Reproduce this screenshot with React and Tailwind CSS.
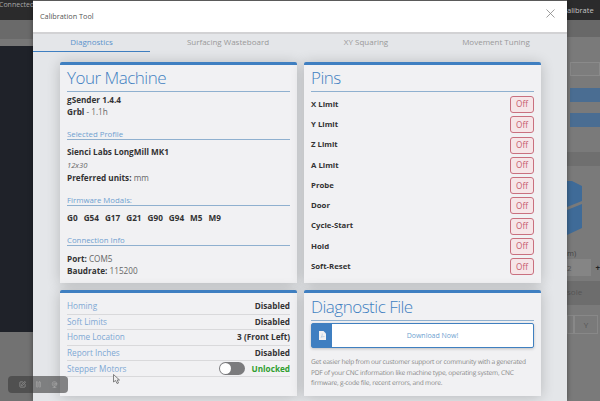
import React from "react";
import { X, Pause, SquarePen, Webcam } from "lucide-react";

const pins = ["X Limit", "Y Limit", "Z Limit", "A Limit", "Probe", "Door", "Cycle-Start", "Hold", "Soft-Reset"];
const modals = ["G0", "G54", "G17", "G21", "G90", "G94", "M5", "M9"];
const settings = [
  ["Homing", "Disabled"],
  ["Soft Limits", "Disabled"],
  ["Home Location", "3 (Front Left)"],
  ["Report Inches", "Disabled"],
];

const Card = ({ children, className }) => (
  <div className={`bg-[#f1f1f3] border-t-[3px] border-[#3f7fc1] rounded-t-[2px] shadow-[0_1px_14px_rgba(0,0,0,0.2)] px-[7px] ${className}`}>
    {children}
  </div>
);

const Heading = ({ children, className }) => (
  <h2 className={`text-[17px] tracking-[-0.5px] font-light leading-[26px] text-[#3f7fc1] border-b border-[#8fb0cf] ${className}`}>{children}</h2>
);

const SubHeading = ({ children, className }) => (
  <div className={`text-[7.8px] leading-[9px] pt-[4px] text-[#6f9fd0] border-b border-[#8fb0cf] ${className}`}>{children}</div>
);

const App = () => {
  return (
    <div
      className="relative w-[600px] h-[401px] overflow-hidden flex bg-[#6d6d6d] text-[#333] text-[8.2px]"
      style={{ fontFamily: "'Open Sans', sans-serif" }}
    >
      {/* dimmed app behind the modal, left side */}
      <div className="w-[33px] shrink-0 flex flex-col">
        <div className="h-[20px] bg-[#2b2b2c] text-[#a8a8a8] text-[7px] leading-[9px] -ml-px whitespace-nowrap">Connected</div>
        <div className="h-[19px] bg-[#6a6a6a]" />
        <div className="h-[7px] bg-[#777777]" />
        <div className="h-[286px] bg-[#1f2229]" />
        <div className="flex-1 bg-[#727272]" />
      </div>

      {/* modal */}
      <div className="w-[534px] shrink-0 mt-px flex flex-col bg-[#e4e6e9] shadow-[0_0_5px_rgba(0,0,0,0.4)] z-10">
        <div className="h-[33px] bg-white flex items-center justify-between pl-[7px] pr-[9px] border-b-2 border-[#d2d2d4] shrink-0">
          <span className="text-[#555] text-[7.3px]">Calibration Tool</span>
          <X size={15} strokeWidth={1.3} className="text-[#888] -mt-[7px]" />
        </div>

        <div className="flex h-[18px] shrink-0 text-[8px] text-center leading-[16px] text-[#999]">
          <div className="w-[117px] text-[#5b93cc] border-b-[1.5px] border-[#3f7fc1]">Diagnostics</div>
          <div className="w-[156px]">Surfacing Wasteboard</div>
          <div className="w-[120px]">XY Squaring</div>
          <div className="w-[140px]">Movement Tuning</div>
        </div>

        <div className="grid grid-cols-[237px_237px] gap-x-[7px] gap-y-[7px] grid-rows-[221px_106px] pl-[27px] pt-[10px]">
          <Card>
            <Heading>Your Machine</Heading>
            <div className="font-bold leading-[12px] mt-[2px]">gSender 1.4.4</div>
            <div className="leading-[12px] text-[#666]"><b className="text-[#333]">Grbl</b> - 1.1h</div>
            <SubHeading className="mt-[8px]">Selected Profile</SubHeading>
            <div className="font-bold leading-[12px] mt-[6px]">Sienci Labs LongMill MK1</div>
            <div className="italic text-[#666] text-[7.6px] leading-[12px] mt-[1px]">12x30</div>
            <div className="leading-[12px] mt-[1px] text-[#666]"><b className="text-[#333]">Preferred units:</b> mm</div>
            <SubHeading className="mt-[8px]">Firmware Modals:</SubHeading>
            <div className="flex gap-[6px] font-bold leading-[12px] mt-[6px]">
              {modals.map((m) => <span key={m}>{m}</span>)}
            </div>
            <SubHeading className="mt-[8px]">Connection Info</SubHeading>
            <div className="leading-[12px] mt-[7px] text-[#666]"><b className="text-[#333]">Port:</b> COM5</div>
            <div className="leading-[12px] text-[#666]"><b className="text-[#333]">Baudrate:</b> 115200</div>
          </Card>

          <Card>
            <Heading>Pins</Heading>
            <div className="flex flex-col gap-[3.3px] mt-[4px]">
              {pins.map((p) => (
                <div key={p} className="flex items-center justify-between">
                  <span className="font-bold text-[7.8px]">{p}</span>
                  <span className="w-[24px] h-[17px] flex items-center justify-center rounded-[3px] border border-[#c9707f] bg-[#f6e6e8] text-[#c65a6c] text-[8.2px]">Off</span>
                </div>
              ))}
            </div>
          </Card>

          <Card className="pt-[6px]">
            {settings.map(([k, v]) => (
              <div key={k} className="flex justify-between h-[15.6px] leading-[14px] border-b border-[#d9d9db]">
                <span className="text-[#7ea8d3]">{k}</span>
                <span className="font-bold">{v}</span>
              </div>
            ))}
            <div className="flex justify-between items-center h-[16px] border-b border-[#d9d9db]">
              <span className="text-[#7ea8d3]">Stepper Motors</span>
              <div className="flex items-center gap-[7px]">
                <div className="w-[26px] h-[13px] rounded-full bg-[#7b7b7d] p-px">
                  <div className="w-[11px] h-[11px] rounded-full bg-white" />
                </div>
                <span className="font-bold text-[#2f9e2f]">Unlocked</span>
              </div>
            </div>
          </Card>

          <Card>
            <Heading className="mt-[1px]">Diagnostic File</Heading>
            <div className="flex h-[25px] mt-[2px] bg-white border border-[#4080c0] rounded-[2px] shadow-[0_1px_3px_rgba(0,0,0,0.2)]">
              <div className="w-[20px] bg-[#3f7fc1] flex items-center justify-center">
                <svg width="7" height="9" viewBox="0 0 7 9">
                  <path d="M0 0 H4.5 L7 2.5 V9 H0 Z" fill="#f2f2f2" />
                  <path d="M2 6.5 C3 5 3.5 3.5 3.2 2.5 M2 6 L5.5 5.5" stroke="#9fbddc" strokeWidth="0.6" fill="none" />
                </svg>
              </div>
              <div className="flex-1 text-center leading-[23px] text-[#6f9fd0] text-[7px]">Download Now!</div>
            </div>
            <p className="text-[6.6px] tracking-[-0.22px] [text-rendering:geometricPrecision] leading-[10.6px] text-[#888] mt-[9px] whitespace-nowrap">
              Get easier help from our customer support or community with a generated<br />
              PDF of your CNC information like machine type, operating system, CNC<br />
              firmware, g-code file, recent errors, and more.
            </p>
          </Card>
        </div>
      </div>

      {/* dimmed app behind the modal, right side */}
      <div className="flex-1 flex flex-col bg-[#7a7a7a] overflow-hidden">
        <div className="h-[20px] bg-[#2b2b2c] text-[#c4c4c4] text-[7.5px] leading-[20px] whitespace-nowrap">alibrate</div>
        <div className="h-[17px] bg-[#686868]" />
        <div className="h-[9px]" />
        <div className="h-[14px] mt-[16px] ml-[3px] bg-[#7d7d7d] border border-[#8a8a8a]" />
        <div className="h-[14px] mt-[12px] ml-[3px] bg-[#4a6d92]" />
        <div className="h-[14px] mt-[11px] ml-[3px] bg-[#4a6d92]" />
        <div className="h-[14px] mt-[25px] bg-[#6f6f6f]" />
        <svg className="mt-[15px] shrink-0" width="15" height="55" viewBox="0 0 15 55">
          <path d="M0 0 L5 0 L15 5 V20 L0 26 Z M0 29 L15 23 V47 L0 54 Z" fill="#3f6b98" />
        </svg>
        <div className="text-[#444] text-[7.5px] leading-[10px] mt-[12px] whitespace-nowrap">m)</div>
        <div className="flex items-center h-[17px] mt-[1px] text-[#555] text-[8px]">
          <span className="w-[26px] h-full bg-[#858585] leading-[17px]">2</span>
          <span className="font-bold text-[#222] ml-[4px]">+</span>
        </div>
        <div className="h-[24px] mt-[5px] bg-[#6d6d6d] text-[#555] text-[8px] leading-[22px] whitespace-nowrap">sole</div>
        <div className="flex h-[19px] mt-[10px] text-[#555] text-[8px]">
          <div className="w-[7px] border border-[#888]" />
          <div className="w-[24px] border border-[#888] text-center leading-[17px]">Y</div>
        </div>
      </div>

      {/* recording toolbar floating over the page */}
      <div className="absolute left-[8px] top-[376px] w-[60px] h-[17px] z-20 rounded-[4px] bg-[#3a3a3a]/60 flex items-center justify-around px-[6px] text-[#aaa]">
        <SquarePen size={7} />
        <Pause size={7} />
        <Webcam size={7} />
      </div>

      {/* cursor */}
      <svg className="absolute left-[113px] top-[374px] z-20" width="7" height="10" viewBox="0 0 7 10">
        <path d="M0.5 0.5 V8 L2.5 6.5 L4 9.5 L5.5 9 L4.2 6 H6.5 Z" fill="#eee" stroke="#555" strokeWidth="0.7" />
      </svg>
    </div>
  );
};

export default App;
